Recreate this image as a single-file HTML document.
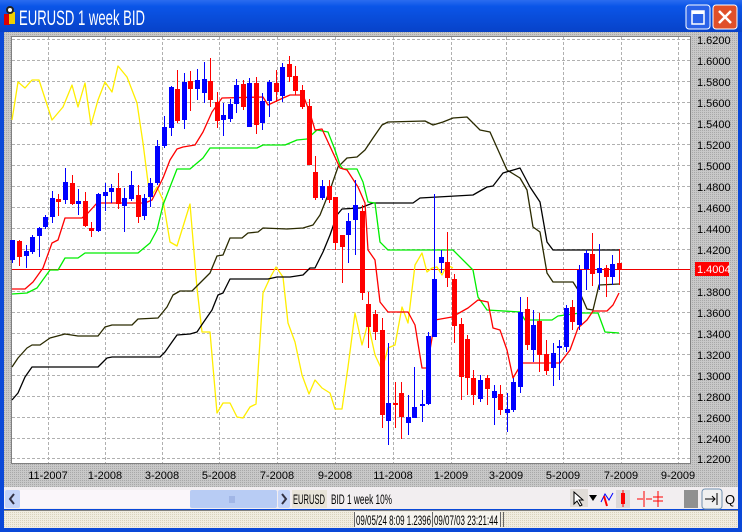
<!DOCTYPE html>
<html><head><meta charset="utf-8"><style>
*{margin:0;padding:0}
body{width:742px;height:532px;overflow:hidden;background:#0a3fd0;font-family:"Liberation Sans",sans-serif;position:relative}
</style></head><body>
<svg width="742" height="532" style="position:absolute;left:0;top:0" font-family="Liberation Sans, sans-serif">
<defs>
<linearGradient id="tb" x1="0" y1="0" x2="0" y2="1"><stop offset="0" stop-color="#2b6cf0"/><stop offset="0.2" stop-color="#0a55e8"/><stop offset="1" stop-color="#0842c8"/></linearGradient>
<pattern id="dots" width="2" height="2" patternUnits="userSpaceOnUse"><rect width="2" height="2" fill="#c8c8c8"/><rect width="1" height="1" fill="#a8a8a8"/></pattern>
<pattern id="sdots" width="2" height="2" patternUnits="userSpaceOnUse"><rect width="2" height="2" fill="#f0ece0"/><rect width="1" height="1" fill="#d8d2bc"/></pattern>
</defs>
<rect width="742" height="532" fill="#0a48d8"/>
<rect x="0" y="0" width="742" height="32" fill="url(#tb)"/>
<rect x="4" y="14" width="6" height="11" fill="#d00"/><rect x="9" y="12" width="6" height="12" fill="#f0d000"/><circle cx="10" cy="10" r="4" fill="#222"/><circle cx="10" cy="10" r="2" fill="#fff"/>
<text x="19" y="25" font-size="21" fill="#fff" textLength="126" lengthAdjust="spacingAndGlyphs">EURUSD 1  week BID</text>
<rect x="686" y="5" width="24" height="24" rx="3" fill="#2a62e8" stroke="#fff"/><rect x="692" y="11" width="12" height="13" fill="none" stroke="#fff" stroke-width="1.5"/><rect x="692" y="11" width="12" height="3" fill="#fff"/>
<rect x="713" y="5" width="24" height="24" rx="3" fill="#e0502a" stroke="#fff"/><path d="M719 11L731 23M731 11L719 23" stroke="#fff" stroke-width="2.5"/>
<rect x="4" y="32" width="734" height="455" fill="url(#dots)"/>
<rect x="11.5" y="36.5" width="679" height="427" fill="#fff" stroke="#808080"/>
<g stroke="#b0b0b0" stroke-dasharray="3,2" stroke-width="1">
<path d="M12 39.5H690M12 60.5H690M12 81.5H690M12 102.5H690M12 123.5H690M12 144.5H690M12 165.5H690M12 186.5H690M12 207.5H690M12 228.5H690M12 249.5H690M12 291.5H690M12 312.5H690M12 333.5H690M12 354.5H690M12 375.5H690M12 396.5H690M12 417.5H690M12 438.5H690M12 458.5H690"/>
<path d="M48.5 37V463M105.5 37V463M162.5 37V463M219.5 37V463M277.5 37V463M335.5 37V463M393.5 37V463M451.5 37V463M506.5 37V463M563.5 37V463M621.5 37V463M678.5 37V463"/>
</g>
<path d="M12 269.5H690" stroke="#e00" stroke-width="1"/>
<g fill="none" stroke-width="1.3" stroke-linejoin="round">
<polyline stroke="#ffee00" points="12,120 18,82 25,88 32,80 39,80 52,120 63,107 72,85 78,107 85,83 91,125 98,100 105,82 112,92 118,66 127,77 137,103 143,143 150,198 157,187 163,200 170,242 177,246 190,204 197,288 202,332 210,332 217,413 223,403 230,403 237,417 243,418 250,407 256,404 263,293 270,278 276,267 283,277 288,323 295,342 302,375 309,394 315,380 322,388 330,393 335,409 342,409 348,367 355,313 362,345 368,323 375,355 382,370 388,348 395,345 402,307 408,323 415,265 422,253 427,272 432,268 437,267 442,275 447,265 453,268"/>
<polyline stroke="#2a2a00" points="12,367 18,358 27,348 32,345 40,345 50,338 65,334 78,336 98,336 105,327 112,325 132,325 138,319 158,318 167,307 173,295 180,291 192,291 200,283 210,273 217,256 223,255 230,238 242,238 248,233 258,232 263,228 287,229 303,228 313,225 320,215 330,190 338,167 347,158 357,157 365,150 373,138 382,125 388,122 425,121 433,125 443,122 453,118 467,117 480,130 490,132 507,170 520,178 527,190 533,227 540,232 547,273 553,282 573,282 580,293 587,309 593,310 599,285 619,284"/>
<polyline stroke="#000" points="12,400 18,393 25,377 32,367 98,367 107,358 112,357 160,357 165,352 172,342 177,335 190,334 197,332 203,323 212,310 218,295 223,293 230,279 268,279 277,277 290,277 303,275 310,268 315,268 323,252 330,235 337,215 342,209 360,208 373,203 413,203 420,198 473,195 487,187 493,186 503,173 520,168 530,187 540,202 547,242 553,250 619,250"/>
<polyline stroke="#00ee00" points="12,294 27,293 37,288 50,270 58,270 65,258 78,258 85,253 138,253 150,243 157,230 163,205 170,187 177,169 190,169 203,158 210,148 257,148 263,145 285,145 297,140 307,139 317,130 328,132 335,150 340,165 343,169 357,169 363,182 368,202 375,203 380,242 388,250 453,250 473,270 478,297 487,310 520,312 525,320 552,320 558,316 580,313 598,313 605,332 619,333"/>
<polyline stroke="#ff0000" points="12,289 25,289 33,282 43,268 52,243 58,240 65,218 82,218 88,213 97,203 145,203 152,200 163,178 170,160 177,149 183,147 195,145 203,132 212,112 222,98 263,97 268,105 283,98 290,95 303,95 310,113 315,130 322,129 340,168 347,170 358,187 365,203 368,250 375,260 380,302 388,312 408,312 415,325 422,368 427,368 435,320 452,317 468,308 478,300 488,302 493,328 500,330 507,350 513,378 522,363 560,363 570,350 578,328 587,320 593,311 607,311 613,305 619,293"/>
</g>
<g stroke="#0000ff" stroke-width="1">
<path d="M12.5 240V263M26.5 245V268M32.5 235V254M39.5 227V257M45.5 215V229M52.5 191V223M65.5 168V204M78.5 189V215M98.5 193V232M105.5 183V211M111.5 184V203M124.5 188V232M131.5 171V201M144.5 194V220M150.5 178V207M157.5 140V185M164.5 116V148M171.5 86V136M184.5 73V129M197.5 69V100M204.5 62V103M223.5 103V136M230.5 99V122M236.5 79V113M249.5 78V127M262.5 93V130M269.5 80V117M282.5 63V102M322.5 180V200M348.5 213V263M355.5 180V255M388.5 343V445M408.5 395V435M414.5 367V418M422.5 390V422M428.5 332V405M434.5 194V337M441.5 250V273M480.5 375V402M494.5 385V425M507.5 393V432M513.5 378V412M520.5 297V393M533.5 310V362M553.5 343V386M559.5 340V380M566.5 305V352M579.5 265V330M586.5 250V290M599.5 244V290M612.5 255V285"/>
</g>
<g fill="#0000ff">
<rect x="10" y="240" width="5" height="20"/><rect x="24" y="251" width="5" height="5"/><rect x="30" y="237" width="5" height="15"/><rect x="37" y="228" width="5" height="8"/><rect x="43" y="217" width="5" height="10"/><rect x="50" y="198" width="5" height="19"/><rect x="63" y="182" width="5" height="18"/><rect x="76" y="201" width="5" height="3"/><rect x="96" y="194" width="5" height="37"/><rect x="103" y="192" width="5" height="4"/><rect x="109" y="188" width="5" height="4"/><rect x="122" y="198" width="5" height="8"/><rect x="129" y="185" width="5" height="14"/><rect x="142" y="198" width="5" height="18"/><rect x="148" y="183" width="5" height="14"/><rect x="155" y="146" width="5" height="37"/><rect x="162" y="127" width="5" height="19"/><rect x="169" y="87" width="5" height="41"/><rect x="182" y="82" width="5" height="38"/><rect x="195" y="80" width="5" height="9"/><rect x="202" y="79" width="5" height="14"/><rect x="221" y="115" width="5" height="5"/><rect x="228" y="104" width="5" height="15"/><rect x="234" y="85" width="5" height="19"/><rect x="247" y="83" width="5" height="44"/><rect x="260" y="101" width="5" height="22"/><rect x="267" y="82" width="5" height="19"/><rect x="280" y="67" width="5" height="29"/><rect x="320" y="186" width="5" height="12"/><rect x="346" y="221" width="5" height="14"/><rect x="353" y="205" width="5" height="15"/><rect x="386" y="403" width="5" height="18"/><rect x="406" y="417" width="5" height="6"/><rect x="412" y="407" width="5" height="11"/><rect x="420" y="404" width="5" height="2"/><rect x="426" y="336" width="5" height="68"/><rect x="432" y="279" width="5" height="58"/><rect x="439" y="257" width="5" height="6"/><rect x="478" y="380" width="5" height="19"/><rect x="492" y="391" width="5" height="7"/><rect x="505" y="409" width="5" height="4"/><rect x="511" y="382" width="5" height="28"/><rect x="518" y="312" width="5" height="75"/><rect x="531" y="325" width="5" height="25"/><rect x="551" y="353" width="5" height="15"/><rect x="557" y="346" width="5" height="2"/><rect x="564" y="308" width="5" height="39"/><rect x="577" y="270" width="5" height="55"/><rect x="584" y="253" width="5" height="16"/><rect x="597" y="268" width="5" height="5"/><rect x="610" y="264" width="5" height="13"/>
</g>
<g stroke="#ff0000" stroke-width="1">
<path d="M19.5 240V266M58.5 194V216M72.5 175V205M85.5 192V227M91.5 222V237M118.5 173V209M138.5 185V223M177.5 70V123M190.5 71V111M210.5 58V107M217.5 92V128M243.5 80V110M256.5 77V134M276.5 70V102M289.5 56V82M295.5 66V95M302.5 85V109M309.5 99V165M315.5 156V200M329.5 180V203M335.5 197V250M342.5 235V283M362.5 205V300M368.5 292V348M375.5 310V340M382.5 318V428M395.5 382V428M401.5 382V439M447.5 232V287M454.5 274V343M461.5 318V400M467.5 335V395M473.5 370V405M487.5 375V405M500.5 385V415M527.5 297V350M539.5 313V372M546.5 340V375M572.5 300V330M592.5 233V286M606.5 265V297M619.5 249V285"/>
</g>
<g fill="#ff0000">
<rect x="17" y="241" width="5" height="16"/><rect x="56" y="199" width="5" height="3"/><rect x="70" y="183" width="5" height="21"/><rect x="83" y="201" width="5" height="25"/><rect x="89" y="228" width="5" height="3"/><rect x="116" y="188" width="5" height="16"/><rect x="136" y="195" width="5" height="22"/><rect x="175" y="89" width="5" height="32"/><rect x="188" y="81" width="5" height="8"/><rect x="208" y="81" width="5" height="19"/><rect x="215" y="102" width="5" height="19"/><rect x="241" y="84" width="5" height="23"/><rect x="254" y="83" width="5" height="42"/><rect x="274" y="83" width="5" height="9"/><rect x="287" y="64" width="5" height="13"/><rect x="293" y="76" width="5" height="15"/><rect x="300" y="90" width="5" height="17"/><rect x="307" y="106" width="5" height="59"/><rect x="313" y="172" width="5" height="26"/><rect x="327" y="186" width="5" height="14"/><rect x="333" y="197" width="5" height="46"/><rect x="340" y="235" width="5" height="12"/><rect x="360" y="211" width="5" height="82"/><rect x="366" y="304" width="5" height="23"/><rect x="373" y="314" width="5" height="18"/><rect x="380" y="330" width="5" height="85"/><rect x="393" y="403" width="5" height="2"/><rect x="399" y="393" width="5" height="24"/><rect x="445" y="262" width="5" height="16"/><rect x="452" y="279" width="5" height="47"/><rect x="459" y="324" width="5" height="53"/><rect x="465" y="339" width="5" height="39"/><rect x="471" y="378" width="5" height="17"/><rect x="485" y="378" width="5" height="11"/><rect x="498" y="394" width="5" height="16"/><rect x="525" y="309" width="5" height="36"/><rect x="537" y="321" width="5" height="34"/><rect x="544" y="354" width="5" height="17"/><rect x="570" y="307" width="5" height="15"/><rect x="590" y="254" width="5" height="20"/><rect x="604" y="268" width="5" height="9"/><rect x="617" y="263" width="5" height="6"/>
</g>
<g font-size="11" fill="#000">
<text x="697" y="44">1.6200</text><text x="697" y="65">1.6000</text><text x="697" y="86">1.5800</text><text x="697" y="107">1.5600</text><text x="697" y="128">1.5400</text><text x="697" y="149">1.5200</text><text x="697" y="170">1.5000</text><text x="697" y="191">1.4800</text><text x="697" y="212">1.4600</text><text x="697" y="233">1.4400</text><text x="697" y="254">1.4200</text><text x="697" y="296">1.3800</text><text x="697" y="317">1.3600</text><text x="697" y="338">1.3400</text><text x="697" y="359">1.3200</text><text x="697" y="380">1.3000</text><text x="697" y="401">1.2800</text><text x="697" y="422">1.2600</text><text x="697" y="443">1.2400</text><text x="697" y="463">1.2200</text>
</g>
<rect x="695" y="262" width="34" height="14" fill="#ff0000"/>
<text x="697" y="273" font-size="11" fill="#fff">1.4004</text>
<g font-size="11" fill="#000" text-anchor="middle">
<text x="48" y="479">11-2007</text><text x="105" y="479">1-2008</text><text x="162" y="479">3-2008</text><text x="219" y="479">5-2008</text><text x="277" y="479">7-2008</text><text x="335" y="479">9-2008</text><text x="393" y="479">11-2008</text><text x="451" y="479">1-2009</text><text x="506" y="479">3-2009</text><text x="563" y="479">5-2009</text><text x="621" y="479">7-2009</text><text x="678" y="479">9-2009</text>
</g>
<rect x="4" y="487" width="734" height="22" fill="#f2eef0"/>
<rect x="5" y="490" width="15" height="18" rx="2" fill="#c4d4f8"/><path d="M14 494L10 499L14 504" stroke="#334" stroke-width="2" fill="none"/>
<rect x="20" y="490" width="170" height="18" fill="#faf6fa"/>
<rect x="190" y="490" width="87" height="18" rx="2" fill="#b8ccf4"/><path d="M230 496V503M232 496V503M234 496V503" stroke="#8aa0d8"/>
<rect x="278" y="490" width="12" height="18" rx="2" fill="#c4d4f8"/><path d="M282 494L286 499L282 504" stroke="#334" stroke-width="2" fill="none"/>
<rect x="292" y="490" width="35" height="18" fill="#e8e4d8"/>
<text x="293" y="504" font-size="14" fill="#000" textLength="32" lengthAdjust="spacingAndGlyphs">EURUSD</text>
<text x="331" y="504" font-size="14" fill="#000" textLength="61" lengthAdjust="spacingAndGlyphs">BID  1 week  10%</text>
<rect x="570" y="489" width="18" height="18" fill="#e0dcd8"/><path d="M574 492L574 504L577 501L580 506L582 505L579 500L583 500Z" fill="#fff" stroke="#000"/>
<path d="M589 495H597L593 501Z" fill="#000"/>
<path d="M601 502L605 494L609 500L613 493" stroke="#0000ff" fill="none"/><path d="M604 496L607 506" stroke="#f00" stroke-width="2"/>
<rect x="616" y="490" width="14" height="18" fill="#dcd8d8"/><rect x="621" y="493" width="4" height="11" fill="#f00"/><path d="M623 490V507" stroke="#f00"/>
<path d="M644 491V507M637 499H643M652 499H646" stroke="#f00"/><path d="M658 491V507M653 497H663M653 501H663" stroke="#f00"/>
<rect x="684" y="490" width="14" height="18" fill="#909090"/>
<rect x="702" y="489" width="20" height="20" rx="3" fill="#f0f0f0" stroke="#7090b0"/><path d="M705 499H715M712 496L715 499L712 502M717 493V505" stroke="#000" fill="none"/>
<text x="725" y="504" font-size="13" fill="#000">Q</text>
<rect x="4" y="510" width="734" height="18" fill="url(#sdots)"/>
<path d="M4 510.5H738" stroke="#808080"/>
<rect x="355" y="512" width="145" height="15" fill="#f6f4ee"/>
<path d="M354.5 512V527M432.5 512V527M500.5 512V527M503.5 512V527" stroke="#666"/>
<text x="356" y="525" font-size="14" fill="#000" textLength="75" lengthAdjust="spacingAndGlyphs">09/05/24 8:09 1.2396</text>
<text x="434" y="525" font-size="14" fill="#000" textLength="64" lengthAdjust="spacingAndGlyphs">09/07/03 23:21:44</text>
</svg>
</body></html>
